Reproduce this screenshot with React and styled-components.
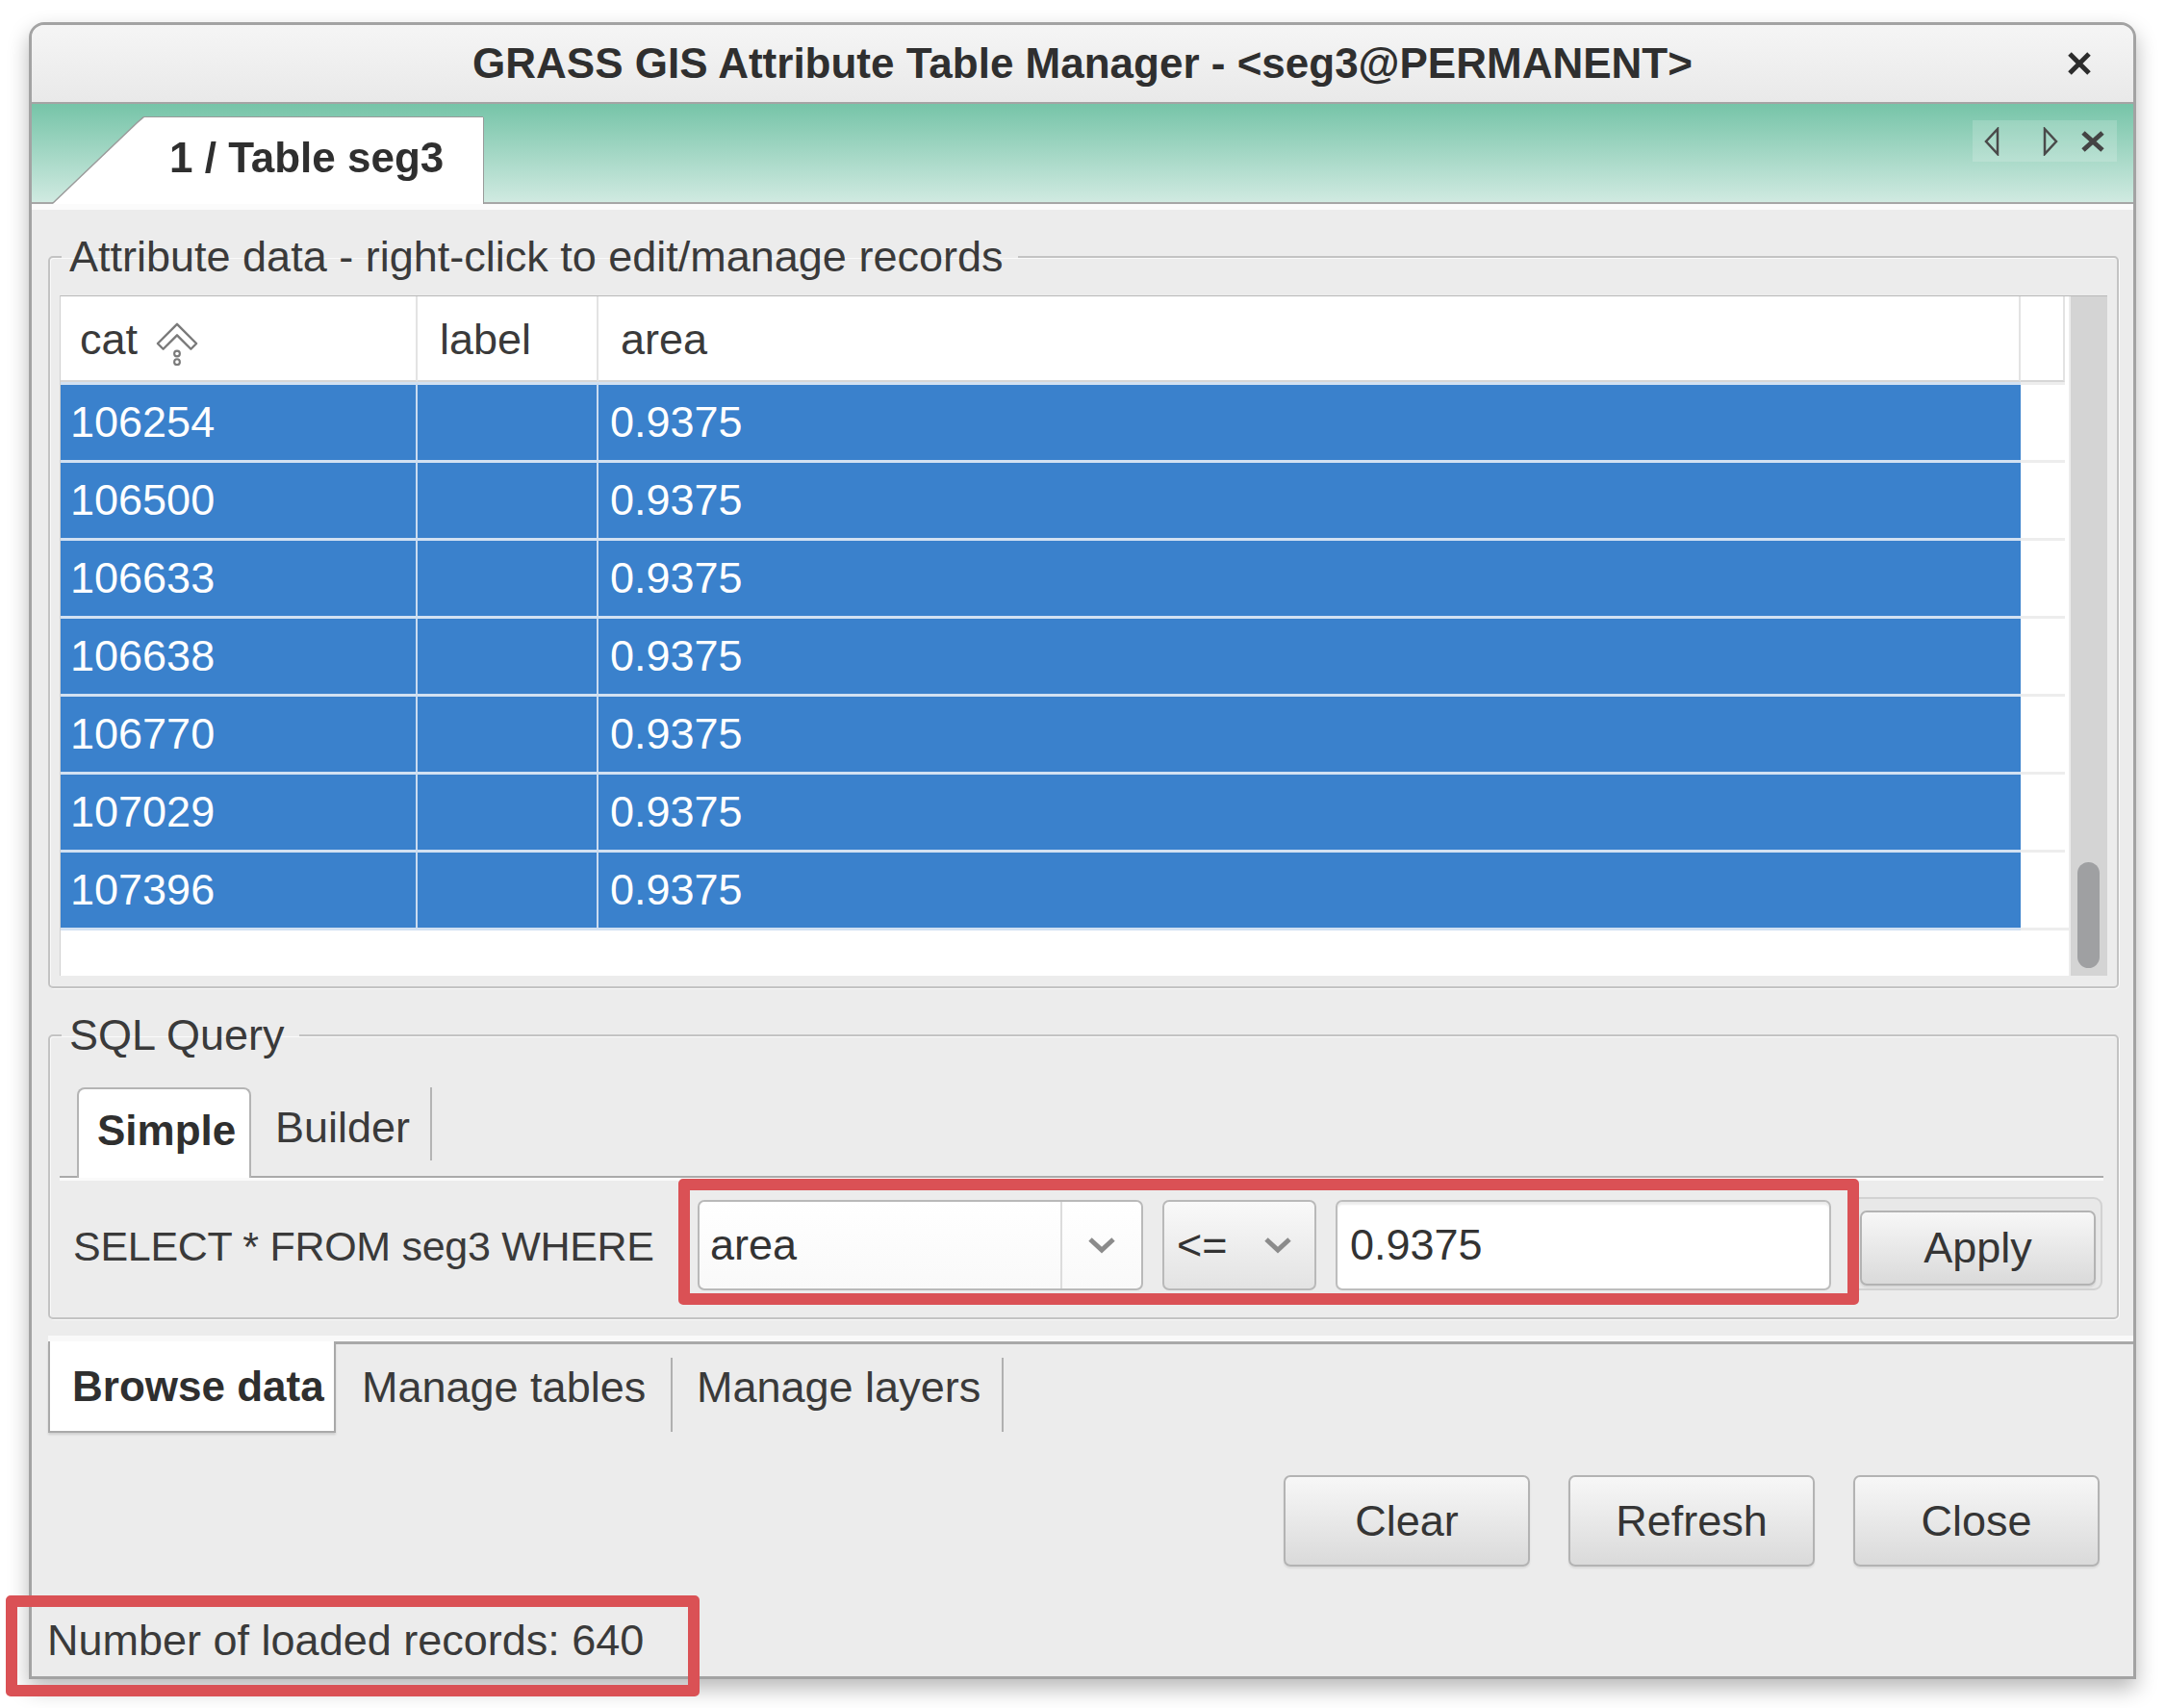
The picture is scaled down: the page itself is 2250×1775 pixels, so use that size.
import styled, { createGlobalStyle } from "styled-components";

const GlobalStyle = createGlobalStyle`
  html, body {
    margin: 0;
    padding: 0;
    background: #ffffff;
  }
  body {
    font-family: "Liberation Sans", Arial, sans-serif;
  }
`;

const Page = styled.div`
  position: relative;
  width: 2250px;
  height: 1775px;
  box-sizing: border-box;
  padding: 23px 0 0 30px;
  font-family: "Liberation Sans", Arial, sans-serif;
  font-size: 45px;
  color: #3a3a3a;
`;

const Window = styled.div`
  width: 2190px;
  height: 1722px;
  box-sizing: border-box;
  border: 3px solid #a3a3a3;
  border-radius: 16px 16px 0 0;
  background: #ececec;
  box-shadow: 0 10px 22px rgba(0, 0, 0, 0.28);
  display: flex;
  flex-direction: column;
  overflow: hidden;
`;

const TitleBar = styled.div`
  flex: none;
  height: 80px;
  display: grid;
  grid-template-columns: 1fr auto 1fr;
  align-items: center;
  padding: 0 43px;
  background: linear-gradient(#f5f5f5, #e9e9e9);
  border-bottom: 2px solid #a4a4a4;
`;

const Title = styled.div`
  grid-column: 2;
  font-size: 44px;
  font-weight: 700;
  color: #2f2f2f;
`;

const CloseIcon = styled.svg`
  grid-column: 3;
  justify-self: end;
`;

const TabBar = styled.div`
  flex: none;
  height: 102px;
  display: flex;
  align-items: flex-end;
  padding: 0 17px 0 22px;
  background: linear-gradient(#76c4a8, #d0eae1);
  border-bottom: 2px solid #a6a6a6;
`;

const PageTabWrap = styled.div`
  position: relative;
  z-index: 1;
  margin-bottom: -2px;
  filter: drop-shadow(-1px -1px 0 #9a9a9a) drop-shadow(1px 0 0 #9a9a9a);
`;

const PageTab = styled.div`
  width: 447px;
  height: 90px;
  box-sizing: border-box;
  padding: 0 0 7px 121px;
  display: flex;
  align-items: center;
  background: #ffffff;
  clip-path: polygon(0 100%, 88px 6px, 95px 0, 100% 0, 100% 100%);
  font-size: 44px;
  font-weight: 700;
  color: #2f2f2f;
`;

const TabControls = styled.div`
  align-self: flex-start;
  margin: 17px 0 0 auto;
  width: 150px;
  height: 43px;
  display: flex;
  align-items: center;
  padding-left: 12px;
  box-sizing: border-box;
  background: rgba(255, 255, 255, 0.18);
`;

const CtrlIcon = styled.svg`
  flex: none;
  margin-left: ${(p) => p.$ml || 0}px;
`;

const Content = styled.div`
  flex: 1;
  display: flex;
  flex-direction: column;
  border-top: 6px solid #fbfbfb;
  padding: 0 15px 0 17px;
  min-height: 0;
`;

const Group = styled.fieldset`
  margin: 24px 0 0;
  padding: 0 10px ${(p) => p.$pb}px 10px;
  border: 2px solid #c3c3c3;
  border-radius: 5px;
  box-shadow: inset 1px 1px 0 #fafafa, 1px 1px 0 #fafafa;
  min-width: 0;
`;

const Legend = styled.legend`
  margin-left: 2px;
  padding: 0 16px 0 8px;
  line-height: 50px;
  color: #3a3a3a;
`;

const TableFrame = styled.div`
  margin-top: 15px;
  height: 706px;
  display: flex;
  border-top: 1px solid #b9b9b9;
  border-left: 1px solid #d0d0d0;
`;

const Grid = styled.div`
  flex: 1;
  background: #ffffff;
  overflow: hidden;
`;

const cols = "371px 188px 1478px 46px";

const HeadRow = styled.div`
  display: grid;
  grid-template-columns: ${cols};
  height: 89px;
`;

const HeadCell = styled.div`
  display: flex;
  align-items: center;
  padding-left: ${(p) => p.$pad}px;
  padding-top: 2px;
  box-sizing: border-box;
  border-right: 2px solid #e3e3e3;
  border-bottom: 2px solid #d6d6d6;
  color: #3a3a3a;
`;

const SortIcon = styled.svg`
  margin-left: 18px;
  margin-top: 8px;
`;

const Row = styled.div`
  display: grid;
  grid-template-columns: ${cols};
  height: 81px;
`;

const Cell = styled.div`
  display: flex;
  align-items: center;
  box-sizing: border-box;
  padding-left: ${(p) => p.$pad || 0}px;
  background: ${(p) => (p.$filler ? "#ffffff" : "#3a81cc")};
  border-top: 3px solid ${(p) => (p.$filler ? "#ededed" : "#d2e1f2")};
  border-right: ${(p) => (p.$sep ? "2px solid #c9dbf0" : "none")};
  color: #ffffff;
`;

const RowEnd = styled.div`
  height: 3px;
  background: linear-gradient(90deg, #d2e1f2 2037px, #ededed 2037px);
`;

const Scrollbar = styled.div`
  flex: none;
  width: 38px;
  margin-left: 2px;
  box-sizing: border-box;
  background: #d4d4d4;
  display: flex;
  flex-direction: column;
  justify-content: flex-end;
  padding: 0 8px 8px 7px;
`;

const Thumb = styled.div`
  height: 110px;
  border-radius: 12px;
  background: #9fa0a2;
`;

const TabStrip = styled.div`
  margin: 29px 4px 0 0;
  padding-left: 18px;
  display: flex;
  align-items: flex-end;
  border-bottom: 2px solid #aaaaaa;
  box-shadow: 0 3px 0 #fafafa;
`;

const SubTab = styled.div`
  box-sizing: border-box;
  display: flex;
  align-items: center;
  width: ${(p) => p.$w}px;
  padding-left: ${(p) => p.$pad}px;
  ${(p) =>
    p.$active
      ? `
    height: 94px;
    margin-bottom: -2px;
    padding-bottom: 6px;
    background: #ffffff;
    border: 2px solid #b4b4b4;
    border-bottom: none;
    border-radius: 8px 8px 0 0;
    font-weight: 700;
    font-size: 44px;
    color: #2f2f2f;
    position: relative;
  `
      : `
    align-self: flex-start;
    height: 76px;
    border-right: 2px solid #b4b4b4;
    padding-top: 8px;
  `}
`;

const QueryRow = styled.div`
  margin-top: 20px;
  padding-left: 14px;
  display: grid;
  grid-template-columns: 629px 463px 160px 515px 262px;
  column-gap: 20px;
  align-items: end;
`;

const QueryLabel = styled.div`
  align-self: center;
  white-space: nowrap;
  padding-top: 6px;
  font-size: 43px;
  letter-spacing: -0.3px;
`;

const Combo = styled.div`
  height: 94px;
  box-sizing: border-box;
  display: grid;
  grid-template-columns: ${(p) => p.$cols};
  align-items: center;
  border: 2px solid #b9b9b9;
  border-radius: 7px;
  background: ${(p) =>
    p.$flat
      ? "linear-gradient(#ffffff, #f9f9f9)"
      : "linear-gradient(#f9f9f9, #e3e3e3)"};
  color: #333333;
`;

const ComboText = styled.span`
  padding-left: ${(p) => p.$pad}px;
`;

const ComboButton = styled.div`
  height: 100%;
  display: flex;
  align-items: center;
  justify-content: ${(p) => (p.$sep ? "center" : "flex-end")};
  padding-right: ${(p) => (p.$sep ? 0 : 23)}px;
  border-left: ${(p) => (p.$sep ? "2px solid #dcdcdc" : "none")};
`;

const ValueInput = styled.div`
  height: 94px;
  box-sizing: border-box;
  display: flex;
  align-items: center;
  padding-left: 13px;
  border: 2px solid #bdbdbd;
  border-radius: 7px;
  background: #ffffff;
  box-shadow: inset 0 3px 2px rgba(0, 0, 0, 0.08);
  color: #333333;
`;

const ApplyWrap = styled.div`
  height: 97px;
  box-sizing: border-box;
  padding: 12px 5px 3px 8px;
  border: 2px solid #d2d2d2;
  border-radius: 9px;
  background: #e8e8e8;
`;

const Button = styled.button`
  width: ${(p) => (p.$w ? `${p.$w}px` : "100%")};
  height: ${(p) => p.$h}px;
  box-sizing: border-box;
  border: 2px solid #b3b3b3;
  border-radius: 7px;
  background: linear-gradient(#f7f7f7, #dadada);
  box-shadow: 0 2px 2px rgba(0, 0, 0, 0.08);
  font-family: "Liberation Sans", Arial, sans-serif;
  font-size: 45px;
  color: #353535;
  padding: 0;
`;

const Notebook = styled.div`
  margin: 23px -15px 0 0;
  display: flex;
  align-items: flex-start;
  border-top: 3px solid #a9a9a9;
  box-shadow: 0 -6px 0 #f9f9f9;
`;

const NoteTab = styled.div`
  box-sizing: border-box;
  display: flex;
  align-items: center;
  width: ${(p) => p.$w}px;
  padding-left: ${(p) => p.$pad}px;
  ${(p) =>
    p.$active
      ? `
    height: 95px;
    margin-top: -3px;
    background: #ffffff;
    border: 2px solid #a9a9a9;
    border-top: none;
    box-shadow: 0 2px 2px rgba(0, 0, 0, 0.12);
    font-weight: 700;
    font-size: 44px;
    color: #2f2f2f;
  `
      : `
    height: 77px;
    margin-top: 14px;
    padding-bottom: 16px;
    border-right: 2px solid #b0b0b0;
  `}
`;

const ButtonRow = styled.div`
  margin-top: 44px;
  padding-right: 20px;
  display: flex;
  justify-content: flex-end;
  gap: 40px;
`;

const StatusBar = styled.div`
  margin-top: auto;
  height: 74px;
  display: flex;
  align-items: center;
  margin-left: -1px;
  color: #3a3a3a;
`;

const Annotation = styled.div`
  position: absolute;
  left: ${(p) => p.$x}px;
  top: ${(p) => p.$y}px;
  width: ${(p) => p.$w}px;
  height: ${(p) => p.$h}px;
  box-sizing: border-box;
  border: 12px solid #da5155;
  border-radius: 5px;
  pointer-events: none;
`;

const records = ["106254", "106500", "106633", "106638", "106770", "107029", "107396"];

function Chevron() {
  return (
    <svg width="30" height="18" viewBox="0 0 30 18">
      <polyline points="3,3 15,14 27,3" fill="none" stroke="#8b8b8b" strokeWidth="5" />
    </svg>
  );
}

export default function App() {
  return (
    <Page>
      <GlobalStyle />
      <Window>
        <TitleBar>
          <Title>GRASS GIS Attribute Table Manager - &lt;seg3@PERMANENT&gt;</Title>
          <CloseIcon width="26" height="26" viewBox="0 0 26 26">
            <path d="M3 3 L23 23 M23 3 L3 23" stroke="#2c2c2c" strokeWidth="5" />
          </CloseIcon>
        </TitleBar>

        <TabBar>
          <PageTabWrap>
            <PageTab>1 / Table seg3</PageTab>
          </PageTabWrap>
          <TabControls>
            <CtrlIcon width="17" height="30" viewBox="0 0 17 30">
              <polygon points="14,2 2,15 14,28" fill="none" stroke="#4a4a4a" strokeWidth="2.5" />
            </CtrlIcon>
            <CtrlIcon $ml={43} width="17" height="30" viewBox="0 0 17 30">
              <polygon points="3,2 15,15 3,28" fill="none" stroke="#4a4a4a" strokeWidth="2.5" />
            </CtrlIcon>
            <CtrlIcon $ml={23} width="26" height="22" viewBox="0 0 26 22">
              <path d="M3 2 L23 20 M23 2 L3 20" stroke="#444" strokeWidth="5" />
            </CtrlIcon>
          </TabControls>
        </TabBar>

        <Content>
          <Group $pb={11}>
            <Legend>Attribute data - right-click to edit/manage records</Legend>
            <TableFrame>
              <Grid>
                <HeadRow>
                  <HeadCell $pad={20}>
                    cat
                    <SortIcon width="46" height="46" viewBox="0 0 48 48">
                      <path
                        d="M24 3 L45 24 L39 30 L24 15 L9 30 L3 24 Z"
                        fill="none"
                        stroke="#7a7a7a"
                        strokeWidth="2.5"
                        strokeLinejoin="round"
                      />
                      <circle cx="24" cy="35" r="3" fill="none" stroke="#7a7a7a" strokeWidth="2.2" />
                      <circle cx="24" cy="44" r="3" fill="none" stroke="#7a7a7a" strokeWidth="2.2" />
                    </SortIcon>
                  </HeadCell>
                  <HeadCell $pad={23}>label</HeadCell>
                  <HeadCell $pad={23}>area</HeadCell>
                  <HeadCell $pad={0} />
                </HeadRow>
                {records.map((cat) => (
                  <Row key={cat}>
                    <Cell $pad={10} $sep>
                      {cat}
                    </Cell>
                    <Cell $sep />
                    <Cell $pad={12}>0.9375</Cell>
                    <Cell $filler />
                  </Row>
                ))}
                <RowEnd />
              </Grid>
              <Scrollbar>
                <Thumb />
              </Scrollbar>
            </TableFrame>
          </Group>

          <Group $pb={28}>
            <Legend>SQL Query</Legend>
            <TabStrip>
              <SubTab $active $w={181} $pad={19}>
                Simple
              </SubTab>
              <SubTab $w={188} $pad={25}>
                Builder
              </SubTab>
            </TabStrip>
            <QueryRow>
              <QueryLabel>SELECT * FROM seg3 WHERE</QueryLabel>
              <Combo $flat $cols="375px 1fr">
                <ComboText $pad={11}>area</ComboText>
                <ComboButton $sep>
                  <Chevron />
                </ComboButton>
              </Combo>
              <Combo $cols="auto 1fr">
                <ComboText $pad={13}>&lt;=</ComboText>
                <ComboButton>
                  <Chevron />
                </ComboButton>
              </Combo>
              <ValueInput>0.9375</ValueInput>
              <ApplyWrap>
                <Button $h={78}>Apply</Button>
              </ApplyWrap>
            </QueryRow>
          </Group>

          <Notebook>
            <NoteTab $active $w={299} $pad={23}>
              Browse data
            </NoteTab>
            <NoteTab $w={350} $pad={27}>
              Manage tables
            </NoteTab>
            <NoteTab $w={344} $pad={25}>
              Manage layers
            </NoteTab>
          </Notebook>

          <ButtonRow>
            <Button $w={256} $h={95}>
              Clear
            </Button>
            <Button $w={256} $h={95}>
              Refresh
            </Button>
            <Button $w={256} $h={95}>
              Close
            </Button>
          </ButtonRow>

          <StatusBar>Number of loaded records: 640</StatusBar>
        </Content>
      </Window>

      <Annotation $x={705} $y={1225} $w={1227} $h={131} />
      <Annotation $x={6} $y={1658} $w={721} $h={105} />
    </Page>
  );
}
